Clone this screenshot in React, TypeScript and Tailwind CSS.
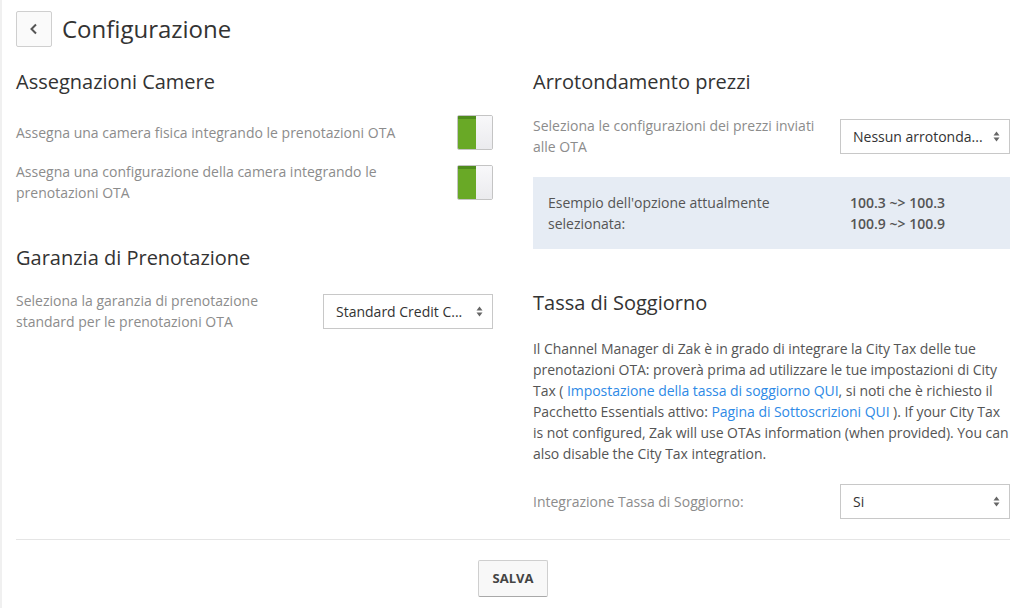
import type { ReactNode } from "react"

function SelectArrows() {
  return (
    <svg width="7" height="11" viewBox="0 0 7 11" className="shrink-0">
      <path d="M3.5 0.5 L6.5 4.5 L0.5 4.5 Z" fill="#666" />
      <path d="M3.5 10.5 L6.5 6.5 L0.5 6.5 Z" fill="#666" />
    </svg>
  )
}

function FakeSelect({ value }: { value: string }) {
  return (
    <div className="flex h-[35px] w-[170px] shrink-0 items-center justify-between border border-[#c8c8c8] bg-white pl-3 pr-[9px] text-[14px] text-[#333]">
      <span className="truncate">{value}</span>
      <SelectArrows />
    </div>
  )
}

function Toggle() {
  return (
    <div className="flex h-[35px] w-[36px] shrink-0 overflow-hidden rounded-[2px] border border-[#c4c4c4]">
      <div className="w-[18px] border-t-[3px] border-[#4f8c1c] bg-[#69a926]" />
      <div className="flex-1 bg-gradient-to-b from-[#f8f8fa] to-[#ebebee]" />
    </div>
  )
}

function Row({ label, children }: { label: ReactNode; children: ReactNode }) {
  return (
    <div className="flex items-center justify-between gap-4">
      <p className="whitespace-nowrap text-[14px] leading-[21px] text-[#8c8c8c]">{label}</p>
      {children}
    </div>
  )
}

function Heading({ children }: { children: ReactNode }) {
  return <h2 className="text-[20px] leading-[24px] text-[#333]">{children}</h2>
}

export default function App() {
  return (
    <div
      className="min-h-[608px] border-l-2 border-[#f0f0f0] bg-white pl-[14px] pr-[10px] pt-[11px]"
      style={{ fontFamily: '"Open Sans", "Noto Sans", sans-serif' }}
    >
      {/* header */}
      <div className="flex items-center gap-[10px]">
        <button className="flex h-[36px] w-[36px] items-center justify-center rounded-[2px] border border-[#cfcfcf] bg-[#fafafa]">
          <svg width="10" height="12" viewBox="0 0 10 12">
            <path d="M7 1.5 L2.5 6 L7 10.5" fill="none" stroke="#555" strokeWidth="2" />
          </svg>
        </button>
        <h1 className="text-[24px] leading-[32px] text-[#333]">Configurazione</h1>
      </div>

      <div className="mt-[23px] grid grid-cols-2 gap-x-[40px]">
        {/* left column */}
        <div className="flex flex-col">
          <Heading>Assegnazioni Camere</Heading>
          <div className="mt-[21px]">
            <Row label="Assegna una camera fisica integrando le prenotazioni OTA">
              <Toggle />
            </Row>
          </div>
          <div className="mt-[11px]">
            <Row
              label={
                <>
                  Assegna una configurazione della camera integrando le
                  <br />
                  prenotazioni OTA
                </>
              }
            >
              <Toggle />
            </Row>
          </div>

          <div className="mt-[43px]">
            <Heading>Garanzia di Prenotazione</Heading>
          </div>
          <div className="mt-[20px]">
            <Row
              label={
                <>
                  Seleziona la garanzia di prenotazione
                  <br />
                  standard per le prenotazioni OTA
                </>
              }
            >
              <FakeSelect value="Standard Credit C..." />
            </Row>
          </div>
        </div>

        {/* right column */}
        <div className="flex flex-col">
          <Heading>Arrotondamento prezzi</Heading>
          <div className="mt-[21px]">
            <Row
              label={
                <>
                  Seleziona le configurazioni dei prezzi inviati
                  <br />
                  alle OTA
                </>
              }
            >
              <FakeSelect value="Nessun arrotonda..." />
            </Row>
          </div>

          <div className="mt-[20px] flex h-[72px] items-center bg-[#e6ecf4] px-[15px] text-[14px] leading-[21px] text-[#555]">
            <div className="w-[302px]">
              Esempio dell'opzione attualmente
              <br />
              selezionata:
            </div>
            <div className="font-semibold">
              100.3 ~&gt; 100.3
              <br />
              100.9 ~&gt; 100.9
            </div>
          </div>

          <div className="mt-[42px]">
            <Heading>Tassa di Soggiorno</Heading>
          </div>
          <p className="mt-[23px] text-[14px] leading-[21px] tracking-[-0.05px] text-[#555]">
            Il Channel Manager di Zak è in grado di integrare la City Tax delle tue prenotazioni OTA:
            proverà prima ad utilizzare le tue impostazioni di City Tax ({" "}
            <a className="text-[#2e8ae6]">Impostazione della tassa di soggiorno QUI</a>, si noti che è
            richiesto il Pacchetto Essentials attivo:{" "}
            <a className="text-[#2e8ae6]">Pagina di Sottoscrizioni QUI</a> ). If your City Tax is not
            configured, Zak will use OTAs information (when provided). You can also disable the City
            Tax integration.
          </p>

          <div className="mt-[20px]">
            <Row label="Integrazione Tassa di Soggiorno:">
              <FakeSelect value="Si" />
            </Row>
          </div>
        </div>
      </div>

      <div className="mt-[20px] border-t border-[#e5e5e5]" />

      <div className="flex justify-center pt-[20px]">
        <button className="h-[37px] rounded-[2px] border border-[#cfcfcf] border-b-[#a9a9a9] bg-[#f8f8f8] px-[14px] text-[13px] font-bold text-[#444]">
          SALVA
        </button>
      </div>
    </div>
  )
}
